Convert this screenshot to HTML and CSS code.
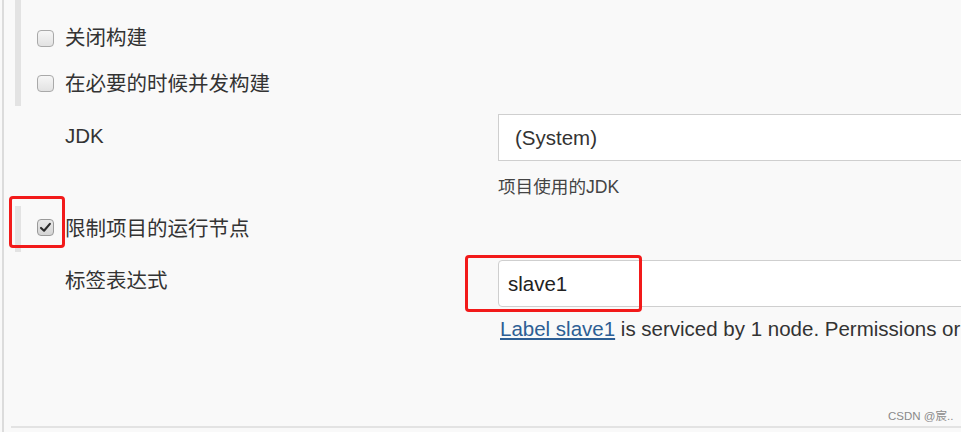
FILE: index.html
```html
<!DOCTYPE html>
<html lang="zh-CN">
<head>
<meta charset="utf-8">
<title>Jenkins 配置</title>
<link rel="stylesheet" href="styles.css">
</head>
<body>
<div class="page">
  <div class="content">
    <div class="group group-top">
      <div class="check-row first">
        <span class="cb"></span>
        <span class="cb-label">关闭构建</span>
      </div>
      <div class="check-row">
        <span class="cb"></span>
        <span class="cb-label">在必要的时候并发构建</span>
      </div>
    </div>

    <div class="field-row jdk">
      <div class="field-label">JDK</div>
      <div class="field-body">
        <div class="select">(System)</div>
        <div class="help">项目使用的JDK</div>
      </div>
    </div>

    <div class="group group-node">
      <div class="check-row">
        <span class="cb checked">
          <svg viewBox="0 0 16 16" width="13" height="13"><path d="M2.5 8.6 L6.2 12 L13.4 3.6" fill="none" stroke="#2b2b2b" stroke-width="2.6" stroke-linecap="round" stroke-linejoin="round"/></svg>
        </span>
        <span class="cb-label">限制项目的运行节点</span>
      </div>
    </div>

    <div class="field-row expr">
      <div class="field-label">标签表达式</div>
      <div class="field-body">
        <div class="input">slave1</div>
        <div class="help link-line"><a class="link" href="#">Label slave1</a> is serviced by 1 node. Permissions or other restrictions may apply.</div>
      </div>
    </div>
  </div>
  <div class="divider"></div>

  <div class="mark mark-check"></div>
  <div class="mark mark-input"></div>
  <div class="watermark">CSDN @宸..</div>
</div>
</body>
</html>
```

FILE: styles.css
```css
html, body {
  margin: 0;
  padding: 0;
  background: #f9f9f9;
  overflow: hidden;
}

body {
  width: 961px;
  height: 432px;
  font-family: "Liberation Sans", "Noto Sans CJK SC", Arial, sans-serif;
  color: #333;
}

.page {
  position: relative;
  margin-left: 2px;
  height: 432px;
  border-left: 2px solid #dcdcdc;
  box-sizing: border-box;
}

.content {
  height: 426px;
}

.divider {
  margin-left: 7px;
  border-top: 2px solid #e3e3e3;
}

.group {
  margin-left: 11px;
  border-left: 6px solid #e3e3e3;
  padding-left: 16px;
}

.group-top {
  height: 106px;
  box-sizing: border-box;
  padding-top: 15px;
}

.check-row {
  display: flex;
  align-items: center;
  height: 45px;
}

.check-row.first {
  height: 46px;
}

.cb {
  flex: none;
  width: 17px;
  height: 17px;
  box-sizing: border-box;
  border: 1px solid #a9a9a9;
  border-radius: 4px;
  background: linear-gradient(#f6f6f6, #e2e2e2);
  display: flex;
  align-items: center;
  justify-content: center;
}

.cb.checked {
  background: linear-gradient(#e8e8e8, #d4d4d4);
  border-color: #9a9a9a;
  margin-top: -3px;
}

.cb-label {
  margin-left: 11px;
  font-size: 20.5px;
  line-height: 24px;
  color: #333;
}

.field-row {
  display: flex;
}

.field-label {
  width: 433px;
  padding-left: 61px;
  box-sizing: content-box;
  font-size: 20.5px;
  line-height: 24px;
  color: #333;
}

.field-body {
  flex: 1;
  min-width: 0;
}

.jdk {
  padding-top: 8px;
}

.jdk .field-label {
  padding-top: 10px;
}

.select {
  width: 640px;
  height: 47px;
  box-sizing: border-box;
  border: 1px solid #cfcfcf;
  background: #fff;
  padding-left: 16px;
  font-size: 20.5px;
  line-height: 45px;
  color: #333;
}

.help {
  margin-top: 14px;
  font-size: 17.6px;
  line-height: 24px;
  color: #444;
  white-space: nowrap;
}

.group-node {
  margin-top: 7px;
  height: 46px;
  padding-left: 16px;
}

.group-node .check-row {
  height: 46px;
}

.expr {
  padding-top: 8px;
}

.expr .field-label {
  padding-top: 9px;
}

.input {
  width: 640px;
  height: 47px;
  box-sizing: border-box;
  border: 1px solid #cfcfcf;
  border-radius: 4px;
  background: #fff;
  padding-left: 9px;
  font-size: 20.5px;
  line-height: 45px;
  color: #222;
}

.link-line {
  margin-top: 10px;
  margin-left: 2px;
  font-size: 20.5px;
  color: #333;
}

.link {
  color: #2d5e94;
  text-decoration: underline;
}

.mark {
  position: absolute;
  box-sizing: border-box;
  border: 3px solid #f21a1a;
  border-radius: 4px;
}

.mark-check {
  left: 5px;
  top: 196px;
  width: 56px;
  height: 52px;
}

.mark-input {
  left: 461px;
  top: 255px;
  width: 177px;
  height: 57px;
}

.watermark {
  position: absolute;
  left: 884px;
  top: 408px;
  font-size: 11.5px;
  line-height: 16px;
  color: #8a8a8a;
  font-family: "Liberation Sans", "Noto Sans CJK SC", sans-serif;
}
```
